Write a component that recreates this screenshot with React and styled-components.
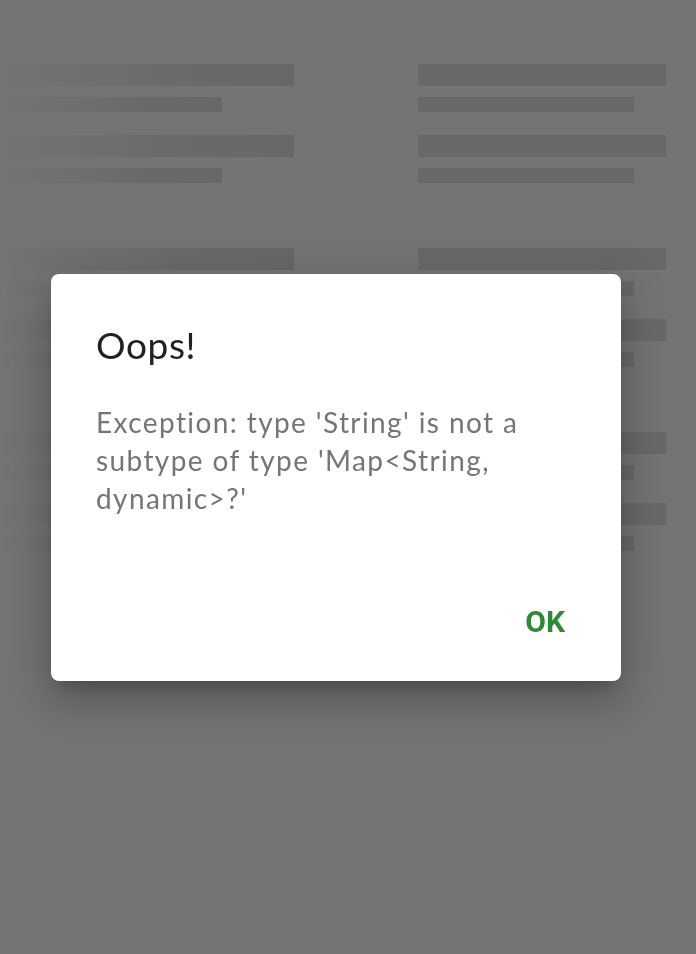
import styled, { createGlobalStyle } from "styled-components";

const GlobalStyle = createGlobalStyle`
  html, body { margin: 0; padding: 0; }
  body {
    background: #747474;
    font-family: Lato, "Noto Sans", sans-serif;
  }
`;

// fondo: esqueleto de carga detrás del diálogo
const Page = styled.div`
  min-height: 954px;
  background: #747474;
  padding-top: 64px;
  padding-left: 7px;
  box-sizing: border-box;
`;

const Group = styled.div`
  display: grid;
  grid-template-columns: 287px 248px;
  column-gap: 124px;
  row-gap: 23px;
  margin-bottom: 65px;
`;

const Item = styled.div`
  display: flex;
  flex-direction: column;
  gap: 11px;
`;

const Bar = styled.div`
  height: ${({ $tall }) => ($tall ? "22px" : "15px")};
  width: ${({ $w }) => $w}px;
  background: ${({ $shimmer }) =>
    $shimmer
      ? "linear-gradient(90deg, #737373 0%, #707070 25%, #6a6a6a 60%, #676767 100%)"
      : "#686868"};
`;

const Overlay = styled.div`
  position: fixed;
  inset: 0;
  display: flex;
  align-items: center;
  padding-left: 51px;
`;

const Dialog = styled.div`
  width: 570px;
  height: 407px;
  box-sizing: border-box;
  background: #fff;
  border-radius: 8px;
  box-shadow: 0 11px 15px -7px rgba(0, 0, 0, 0.2),
    0 24px 38px 3px rgba(0, 0, 0, 0.14), 0 9px 46px 8px rgba(0, 0, 0, 0.12);
  padding: 49px 45px 0 45px;
  display: flex;
  flex-direction: column;
`;

const Title = styled.h2`
  margin: 0;
  font-size: 37px;
  font-weight: 400;
  line-height: 44px;
  letter-spacing: 0.6px;
  color: #212121;
`;

const Message = styled.p`
  margin: 36px 0 0 0;
  font-size: 28px;
  line-height: 38px;
  letter-spacing: 1.4px;
  color: #757575;
`;

const Actions = styled.div`
  margin-top: auto;
  display: flex;
  justify-content: flex-end;
  padding: 0 11px 42px 0;
`;

const OkButton = styled.button`
  border: none;
  background: none;
  padding: 0;
  font-family: Roboto, sans-serif;
  font-weight: 700;
  font-size: 30px;
  color: #2e8b35;
  cursor: pointer;
`;

function SkeletonGroup() {
  return (
    <Group>
      {[0, 1].map((i) => [
        <Item key={`l${i}`}>
          <Bar $tall $w={287} $shimmer />
          <Bar $w={215} $shimmer />
        </Item>,
        <Item key={`r${i}`}>
          <Bar $tall $w={248} />
          <Bar $w={216} />
        </Item>,
      ])}
    </Group>
  );
}

export default function App() {
  return (
    <>
      <GlobalStyle />
      <Page>
        <SkeletonGroup />
        <SkeletonGroup />
        <SkeletonGroup />
      </Page>
      <Overlay>
        <Dialog>
          <Title>Oops!</Title>
          <Message>
            Exception: type 'String' is not a subtype of type 'Map&lt;String,
            dynamic&gt;?'
          </Message>
          <Actions>
            <OkButton>OK</OkButton>
          </Actions>
        </Dialog>
      </Overlay>
    </>
  );
}
